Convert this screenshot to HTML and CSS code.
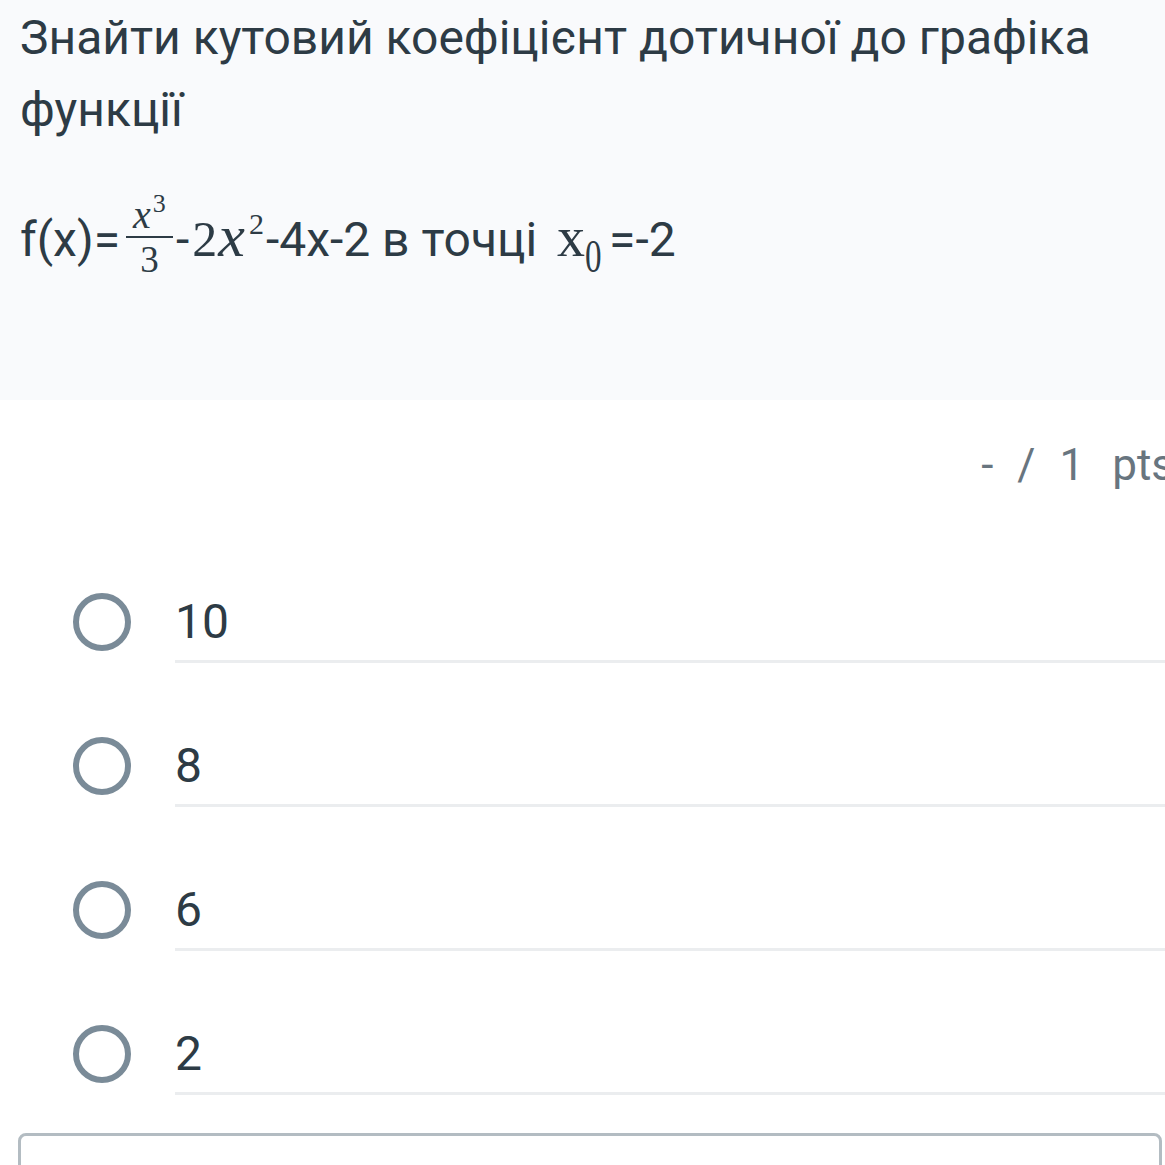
FILE: index.html
```html
<!DOCTYPE html>
<html lang="uk">
<head>
<meta charset="utf-8">
<title>Питання</title>
<link rel="stylesheet" href="styles.css">
</head>
<body>
<div class="page">
  <section class="question">
    <p class="title">Знайти кутовий коефіцієнт дотичної до графіка функції</p>
    <p class="formula">f(x)=<span class="frac"><span class="num"><i class="mi">x</i><span class="sup3">3</span></span><span class="bar"></span><span class="den">3</span></span>-<span class="mn">2</span><i class="mi big">x</i><span class="sup2">2</span>-4x-2 в точці <span class="xr">x</span><span class="sub0">0</span>=-2</p>
  </section>
  <div class="points"><span>-</span><span>/</span><span>1</span><span>pts</span></div>
  <ul class="answers">
    <li class="answer"><span class="radio"></span><span class="label">10</span></li>
    <li class="answer"><span class="radio"></span><span class="label">8</span></li>
    <li class="answer"><span class="radio"></span><span class="label">6</span></li>
    <li class="answer"><span class="radio"></span><span class="label">2</span></li>
  </ul>
  <div class="box"></div>
</div>
</body>
</html>
```
FILE: styles.css
```css
html, body {
  margin: 0;
  padding: 0;
  background: #ffffff;
  overflow: hidden;
}
.page {
  width: 1165px;
  height: 1165px;
  overflow: hidden;
  font-family: Roboto, "Noto Sans", sans-serif;
  color: #2d3b45;
}
.question {
  background: #f9fafc;
  height: 400px;
  box-sizing: border-box;
  padding: 2px 20px 0 20px;
}
.title {
  margin: 0;
  font-size: 48px;
  line-height: 72px;
}
.formula {
  margin: 52px 0 0 0;
  font-size: 48px;
  line-height: 72px;
  white-space: nowrap;
}
.frac {
  display: inline-block;
  vertical-align: -16px;
  text-align: center;
  margin: 0 3px 0 6px;
}
.num {
  display: block;
  font-family: "Liberation Serif", "DejaVu Serif", serif;
  font-size: 40px;
  line-height: 34px;
  padding: 0 2px;
}
.mi {
  font-family: "Liberation Serif", "DejaVu Serif", serif;
  font-style: italic;
  letter-spacing: 1px;
}
.big {
  font-size: 60px;
}
.sup3 {
  font-size: 26px;
  line-height: 0;
  vertical-align: 16px;
  margin-left: 1px;
}
.bar {
  display: block;
  border-top: 2px solid #2d3b45;
  margin-top: 4px;
  width: 47px;
}
.den {
  display: block;
  font-family: "Liberation Serif", "DejaVu Serif", serif;
  font-size: 37px;
  line-height: 34px;
  margin-top: 5px;
}
.mn {
  font-family: "Liberation Serif", "DejaVu Serif", serif;
  font-size: 50px;
  margin-left: 3px;
  margin-right: 1px;
}
.sup2 {
  font-family: "Liberation Serif", "DejaVu Serif", serif;
  font-size: 30px;
  line-height: 0;
  vertical-align: 22px;
  margin-left: 3px;
  margin-right: 2px;
}
.xr {
  font-family: "Liberation Serif", "DejaVu Serif", serif;
  font-size: 56px;
  margin-left: 8px;
}
.sub0 {
  font-family: "Liberation Serif", "DejaVu Serif", serif;
  font-size: 46px;
  line-height: 0;
  vertical-align: -16px;
  display: inline-block;
  transform: scaleX(0.72);
  transform-origin: left center;
  width: 24px;
}
.points {
  display: flex;
  justify-content: flex-end;
  gap: 24px;
  margin: 37px -9px 0 0;
  font-size: 44px;
  line-height: 56px;
  color: #68757f;
  white-space: nowrap;
}
.points span:last-child {
  margin-left: 4px;
}
.answers {
  list-style: none;
  margin: 100px 0 0 0;
  padding: 0 0 0 73px;
}
.answer {
  display: flex;
  align-items: flex-start;
  margin-bottom: 74px;
}
.radio {
  flex: none;
  width: 58px;
  height: 58px;
  box-sizing: border-box;
  border: 6px solid #7a8b98;
  border-radius: 50%;
  margin-right: 44px;
}
.label {
  flex: 1;
  font-size: 48px;
  line-height: 58px;
  padding-bottom: 9px;
  border-bottom: 3px solid #ebedef;
}
.box {
  margin: -36px 3px 0 18px;
  height: 120px;
  border: 3px solid #b3bcc2;
  border-radius: 8px;
}
```
